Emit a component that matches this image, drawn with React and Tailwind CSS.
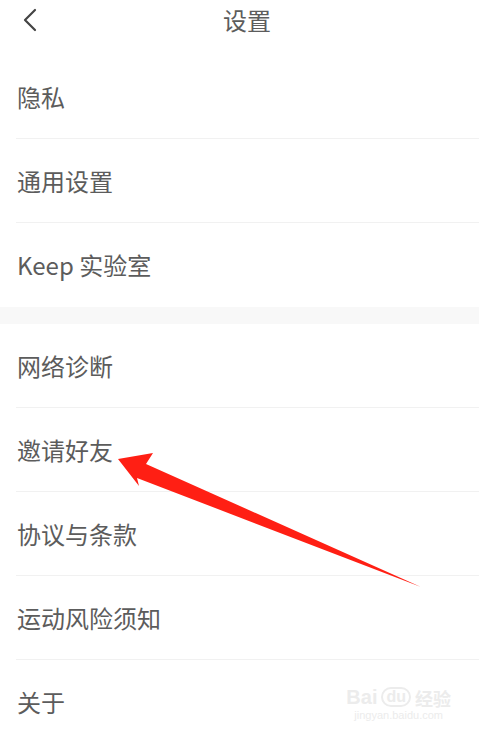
import React from 'react';

const GROUP_ONE = ['隐私', '通用设置', 'Keep 实验室'];
const GROUP_TWO = ['网络诊断', '邀请好友', '协议与条款', '运动风险须知', '关于'];

const FONT = { fontFamily: '"Noto Sans CJK SC", "Noto Sans", sans-serif' };

function Row({ label, last }) {
  return (
    <div className="pl-4">
      <div className={`h-[84px] flex items-center pl-[1px] ${last ? '' : 'border-b border-[#f1f1f1]'}`}>
        <span className="text-[24px] text-[#5c5c5c] leading-none">{label}</span>
      </div>
    </div>
  );
}

export default function App() {
  return (
    <div className="relative w-[479px] h-[729px] overflow-hidden bg-white" style={FONT}>
      {/* Header */}
      <div className="relative h-[55px] flex items-start justify-center pt-[5px] pl-[15px]">
        <svg className="absolute left-[22px] top-[8px]" width="16" height="24" viewBox="0 0 16 24" fill="none">
          <path d="M13 2 L3 12 L13 22" stroke="#444" strokeWidth="2.2" strokeLinecap="round" strokeLinejoin="round" />
        </svg>
        <span className="text-[24px] text-[#5c5c5c] leading-[30px]">设置</span>
      </div>

      {GROUP_ONE.map((l, i) => (
        <Row key={l} label={l} last={i === GROUP_ONE.length - 1} />
      ))}

      <div className="h-[17px] bg-[#f8f8f8]" />

      {GROUP_TWO.map((l, i) => (
        <Row key={l} label={l} last={i === GROUP_TWO.length - 1} />
      ))}

      {/* Baidu watermark */}
      <div className="absolute right-[28px] bottom-[8px] flex flex-col items-center text-[#ececec] leading-none">
        <div className="flex items-end gap-1">
          <span className="text-[20px] font-bold" style={{ fontFamily: '"Liberation Sans", sans-serif' }}>Bai</span>
          <span className="text-[16px] font-bold border-2 border-[#ececec] rounded-full px-[3px]" style={{ fontFamily: '"Liberation Sans", sans-serif' }}>du</span>
          <span className="text-[18px] font-bold">经验</span>
        </div>
        <span className="text-[11px] mt-[3px]" style={{ fontFamily: '"Liberation Sans", sans-serif' }}>jingyan.baidu.com</span>
      </div>

      {/* Annotation arrow */}
      <svg className="absolute left-0 top-0 pointer-events-none" width="479" height="729" viewBox="0 0 479 729">
        <polygon points="118,459 153,453 146,464 421,587 137,478 139,486" fill="#ff1f14" />
      </svg>
    </div>
  );
}
